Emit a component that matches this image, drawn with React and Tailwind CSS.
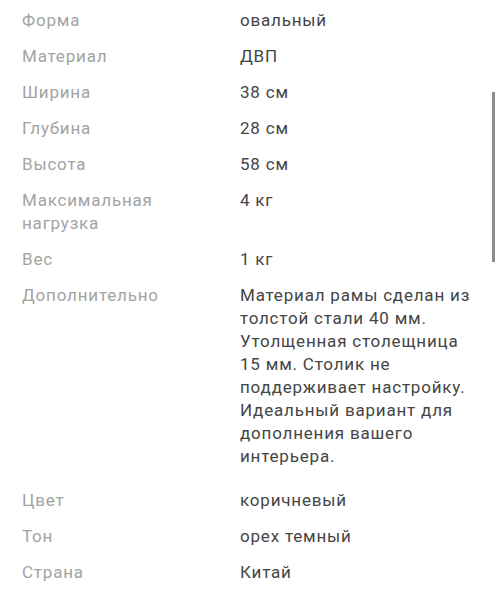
import React from 'react';

const specs = [
  { label: 'Форма', value: 'овальный' },
  { label: 'Материал', value: 'ДВП' },
  { label: 'Ширина', value: '38 см' },
  { label: 'Глубина', value: '28 см' },
  { label: 'Высота', value: '58 см' },
  { label: 'Максимальная нагрузка', value: '4 кг' },
  { label: 'Вес', value: '1 кг' },
  {
    label: 'Дополнительно',
    value:
      'Материал рамы сделан из толстой стали 40 мм. Утолщенная столещница 15 мм. Столик не поддерживает настройку. Идеальный вариант для дополнения вашего интерьера.',
  },
  { label: 'Цвет', value: 'коричневый' },
  { label: 'Тон', value: 'орех темный' },
  { label: 'Страна', value: 'Китай' },
];

const SpecRow = ({ label, value, extraGap }) => (
  <div className={`grid grid-cols-[218px_1fr] ${extraGap ? 'mb-[21px]' : 'mb-[13px]'}`}>
    <div className="text-[#a3a3a3] pr-4">{label}</div>
    <div className="text-[#454545]">{value}</div>
  </div>
);

const App = () => {
  return (
    <div className="relative w-[500px] h-[616px] overflow-hidden bg-white font-['Roboto',sans-serif] text-[17px] leading-[23px] tracking-[0.8px]">
      <div className="pl-[22px] pr-[20px] pt-[9px]">
        {specs.map((s) => (
          <SpecRow key={s.label} label={s.label} value={s.value} extraGap={s.label === 'Дополнительно'} />
        ))}
      </div>
      <div className="absolute right-[5px] top-[92px] w-[3px] h-[170px] bg-[#8c8c8c]" />
    </div>
  );
};

export default App;
